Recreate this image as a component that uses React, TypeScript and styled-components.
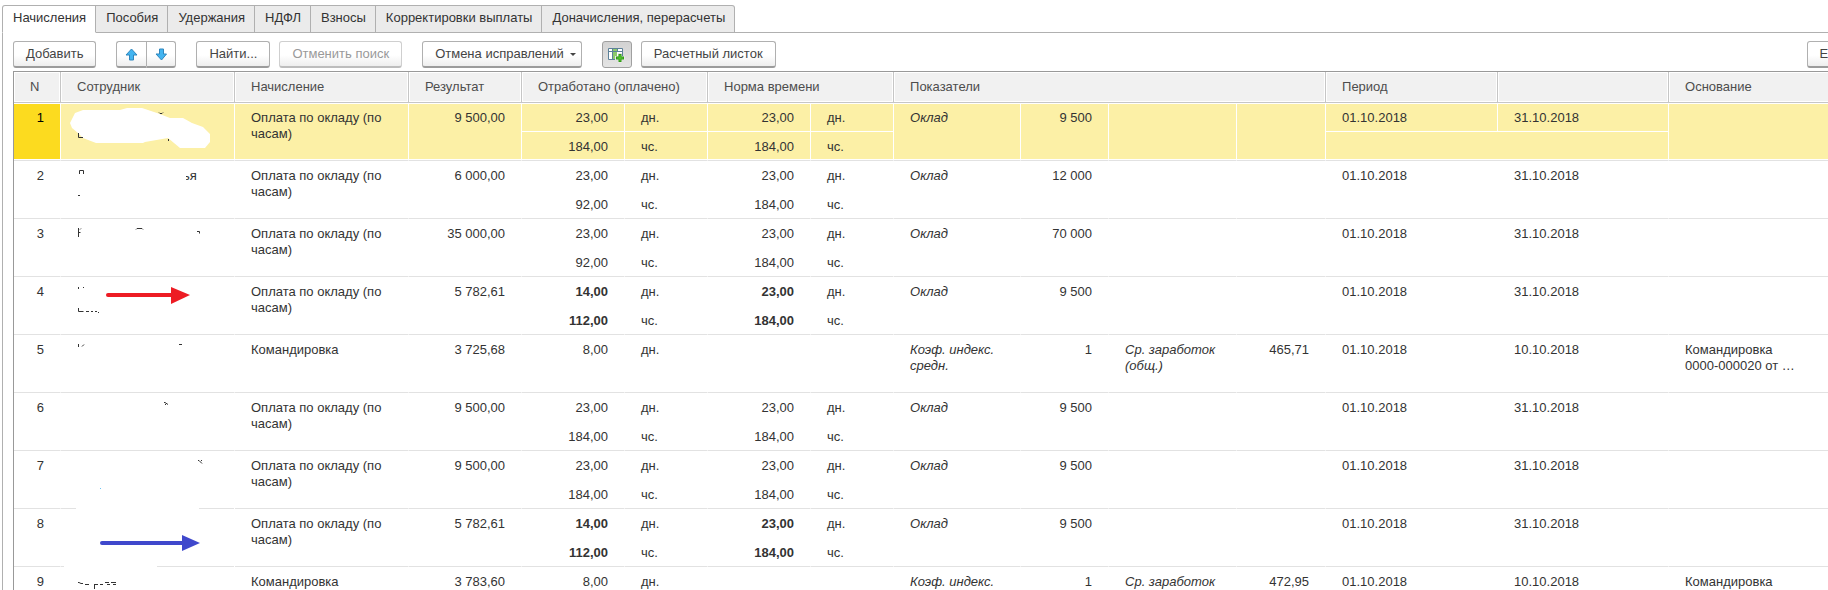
import React from "react";
import styled, { createGlobalStyle, css } from "styled-components";

const GlobalStyle = createGlobalStyle`
  * { box-sizing: border-box; }
  body {
    margin: 0;
    background: #fff;
    color: #333;
    font: 13px/16px "Liberation Sans", Arial, sans-serif;
  }
`;

const Viewport = styled.main`
  height: 100vh;
  overflow: hidden;
  padding: 5px 0 0 2px;
`;

const Workspace = styled.div`
  display: flex;
  flex-direction: column;
  width: calc(100% + 36px);
  min-width: 1720px;
  min-height: 100%;
`;

const TabBar = styled.div`
  display: flex;
  box-shadow: inset 0 -1px #b0b0b0;
`;

const Tab = styled.button<{ $active?: boolean }>`
  height: 28px;
  padding: 0 9px 2px 10px;
  border: 1px solid #b0b0b0;
  border-left-width: ${(p) => (p.$active ? "1px" : "0")};
  border-bottom-color: ${(p) => (p.$active ? "#fff" : "#b0b0b0")};
  background: ${(p) => (p.$active ? "#fff" : "#ebebeb")};
  color: #333;
  font: inherit;
  &:first-child { border-top-left-radius: 3px; }
  &:last-child { border-top-right-radius: 3px; }
`;

const Panel = styled.section`
  flex: 1;
  padding: 8px 0 0 10px;
  border-left: 1px solid #b0b0b0;
`;

const Toolbar = styled.div`
  display: flex;
  align-items: center;
  gap: 20px;
  height: 30px;
  padding-bottom: 3px;
`;

const ButtonGroup = styled.div`
  display: flex;
  gap: 9px;
`;

const PairGroup = styled.div`
  display: flex;
  button:first-child { border-radius: 3px 0 0 3px; border-right-width: 0; }
  button:last-child { border-radius: 0 3px 3px 0; }
`;

const Button = styled.button<{ $icon?: boolean; $pressed?: boolean }>`
  display: flex;
  align-items: center;
  justify-content: center;
  gap: 6px;
  height: 27px;
  width: ${(p) => (p.$icon ? "30px" : "auto")};
  padding: ${(p) => (p.$icon ? "0" : "0 12px")};
  border: 1px solid #b0b0b0;
  border-bottom: 2px solid #9c9c9c;
  border-radius: 3px;
  background: linear-gradient(#fff 55%, #eee);
  color: #444;
  font: inherit;
  white-space: nowrap;
  &:disabled {
    color: #999;
    border-color: #cfcfcf;
    border-bottom-color: #bdbdbd;
  }
  ${(p) =>
    p.$pressed &&
    css`
      background: linear-gradient(#d2d2d2, #e4e4e4);
      border: 1px solid #a0a0a0;
    `}
`;

const MenuButton = styled(Button)`
  padding-right: 5px;
`;

const MoreButton = styled(MenuButton)`
  margin-left: auto;
`;

const Caret = styled.span`
  border: 3px solid transparent;
  border-top-color: #444;
  border-bottom: 0;
`;

const Grid = styled.table`
  width: 100%;
  table-layout: fixed;
  border-collapse: separate;
  border-spacing: 0;
  border: solid #999;
  border-width: 1px 0 0 1px;
`;

const Head = styled.th`
  height: 31px;
  padding: 0 16px;
  border: solid #c6c6c6;
  border-width: 0 1px 1px 0;
  background: #f1f1f1;
  box-shadow: inset 0 0 0 1px #fff;
  color: #4d4d4d;
  font-weight: normal;
  text-align: left;
  white-space: nowrap;
`;

const Line = styled.tr<{ $selected: boolean }>`
  height: 29px;
  background: ${(p) => (p.$selected ? "#fcf0a6" : "#fff")};
`;

type CellProps = {
  $right?: boolean;
  $bold?: boolean;
  $italic?: boolean;
  $marker?: boolean;
  $inner?: boolean;
};

const Cell = styled.td<CellProps>`
  padding: 7px 16px 0;
  border-right: 1px solid #fff;
  border-bottom: 1px solid ${(p) => (p.$inner ? "#fff" : "#e2e2e2")};
  box-shadow: inset 0 ${(p) => (p.$inner ? "1px" : "-1px")} #fff;
  vertical-align: top;
  overflow: hidden;
  text-align: ${(p) => (p.$right ? "right" : "left")};
  font-weight: ${(p) => (p.$bold ? "bold" : "normal")};
  font-style: ${(p) => (p.$italic ? "italic" : "normal")};
  background: ${(p) => (p.$marker ? "#fcdb1f" : "transparent")};
  color: ${(p) => (p.$marker ? "#000" : "#333")};
`;

const TallCell = styled(Cell)`
  box-shadow: inset 0 1px #fff, inset 0 -1px #fff;
`;

const PersonCell = styled(TallCell)`
  padding: 0;
`;

const WipedCell = styled(PersonCell)<{ $from: number; $to: number }>`
  border-bottom-width: 0;
  background: linear-gradient(
      to right,
      #e2e2e2 ${(p) => p.$from}px,
      #fff ${(p) => p.$from}px ${(p) => p.$to}px,
      #e2e2e2 ${(p) => p.$to}px
    )
    bottom / 100% 1px no-repeat;
  box-shadow: none;
`;

const Sketch = styled.svg`
  display: block;
  width: 173px;
  height: 57px;
`;

const Basis = styled.div`
  max-width: 112px;
`;

type Entry = {
  kind: string;
  sum: string;
  days: string;
  hours?: string;
  normDays?: string;
  normHours?: string;
  bold?: boolean;
  ind1: string;
  val1: string;
  ind2?: string;
  val2?: string;
  to: string;
  basis?: string;
};

const salary = (sum: string, val1: string, days = "23,00", hours = "184,00", bold = false): Entry => ({
  kind: "Оплата по окладу (по часам)",
  sum,
  days,
  hours,
  normDays: "23,00",
  normHours: "184,00",
  bold,
  ind1: "Оклад",
  val1,
  to: "31.10.2018",
});

const trip = (sum: string, val2: string): Entry => ({
  kind: "Командировка",
  sum,
  days: "8,00",
  ind1: "Коэф. индекс. средн.",
  val1: "1",
  ind2: "Ср. заработок (общ.)",
  val2,
  to: "10.10.2018",
  basis: "Командировка 0000-000020 от …",
});

const entries: Entry[] = [
  salary("9 500,00", "9 500"),
  salary("6 000,00", "12 000", "23,00", "92,00"),
  salary("35 000,00", "70 000", "23,00", "92,00"),
  salary("5 782,61", "9 500", "14,00", "112,00", true),
  trip("3 725,68", "465,71"),
  salary("9 500,00", "9 500"),
  salary("9 500,00", "9 500"),
  salary("5 782,61", "9 500", "14,00", "112,00", true),
  trip("3 783,60", "472,95"),
];

const ink = { stroke: "#333", fill: "none", strokeWidth: 1 };

/* Marks left of the erased names, in the coordinates of the name cell. */
const marks: React.ReactNode[] = [
  <>
    <path
      d="M9 20L14 10 22 7H59L66 5H81L96 10 109 15H122L131 20 142 24 149 31V39L144 45H119L107 35 84 39 82 40H35L22 35 17 30 11 25z"
      fill="#fff"
    />
    <path d="M17.500 30v4.500h4.500M98 9.500l1 1h2l1-1M107.500 36v2" {...ink} />
  </>,
  <>
    <path d="M18.500 13v-3.500h4V13M17 34.500h2" {...ink} />
    <text x="122" y="19" fontSize="13" fill="#333">ья</text>
    <path d="M120 8h8v6h-3v6h-5z" fill="#fff" />
  </>,
  <path d="M17.500 9v9M18 13.500h1.500M19 10.500l1-1M75 10.500l1-1h5l1 1M136 12.500h2.500v2" {...ink} />,
  <>
    <path d="M17.500 10v2M22 10.500h1M17.500 31v3.500h5M25 34.500h3M30 34.500h2M34 34.500h2M37 35.500h1" {...ink} />
    <path d="M47 18h66" stroke="#ed1c24" strokeWidth="4" strokeLinecap="round" />
    <path d="M110 10l19 8-19 9z" fill="#ed1c24" />
  </>,
  <path d="M17.500 9v3M23 9.500l-2 2M118 9.500h3" {...ink} />,
  <path d="M103 9.500h1l3 2M104 12l2-2" {...ink} />,
  <>
    <path d="M137 9.500h1l3 3M140 9.500h1" {...ink} />
    <path d="M39 37.500h1" stroke="#6cc4f5" />
  </>,
  <>
    <path d="M41 34h80" stroke="#3f48cc" strokeWidth="4" strokeLinecap="round" />
    <path d="M121 26l18 8-18 8z" fill="#3f48cc" />
  </>,
  <path d="M17 15.500h1l2 1h2M24 17.500h4M33.500 17v5M33 17.500h4M39 17.500h3M44 15.500h4M46 17.500h3M50 15.500h5M52 17.500h3" {...ink} />,
];

/* Stretch of the bottom rule that is wiped out in a name cell. */
const wipes: Record<number, [number, number]> = { 6: [15, 138], 7: [3, 96] };

const columns = [47, 174, 174, 113, 103, 83, 103, 83, 127, 88, 128, 89, 172, 171];

function Arrow({ down }: { down?: boolean }) {
  return (
    <svg width="13" height="13" viewBox="0 0 13 13" aria-hidden="true">
      <path
        d={down ? "M4.500 1h4v5h3L6.500 12 1 6h3.500z" : "M6.500 1L12 7H8.500v5h-4V7H1z"}
        fill="#42b4f0"
        stroke="#2f86bd"
      />
    </svg>
  );
}

function ColumnsIcon() {
  return (
    <svg width="17" height="16" viewBox="0 0 17 16" aria-hidden="true">
      <path d="M.5 1.500h14v11H.5z" fill="#fff" stroke="#5c8199" />
      <path d="M5 2h4v10H5z" fill="#8cc96b" />
      <path d="M0 4.500h15M4.500 1v4M9.500 1v4M4.500 5v8" stroke="#5c8199" />
      <path d="M12 6v10M7 11h10" stroke="#e8e8e8" strokeWidth="4" />
      <path d="M12 7v8M8 11h8" stroke="#2f9a14" strokeWidth="3" />
      <path d="M12 8v6M9 11h6" stroke="#5cc936" strokeWidth="1" />
    </svg>
  );
}

function Person({ index }: { index: number }) {
  const drawing = <Sketch viewBox="0 0 173 57" aria-hidden="true">{marks[index]}</Sketch>;
  const wipe = wipes[index];
  return wipe ? (
    <WipedCell rowSpan={2} $from={wipe[0]} $to={wipe[1]}>{drawing}</WipedCell>
  ) : (
    <PersonCell rowSpan={2}>{drawing}</PersonCell>
  );
}

function Record({ entry: e, index }: { entry: Entry; index: number }) {
  const selected = index === 0;
  return (
    <>
      <Line $selected={selected}>
        <TallCell rowSpan={2} $right $marker={selected}>{index + 1}</TallCell>
        <Person index={index} />
        <TallCell rowSpan={2}>{e.kind}</TallCell>
        <TallCell rowSpan={2} $right>{e.sum}</TallCell>
        <Cell $inner $right $bold={e.bold}>{e.days}</Cell>
        <Cell $inner>дн.</Cell>
        <Cell $inner $right $bold={e.bold}>{e.normDays}</Cell>
        <Cell $inner>{e.normDays && "дн."}</Cell>
        <TallCell rowSpan={2} $italic>{e.ind1}</TallCell>
        <TallCell rowSpan={2} $right>{e.val1}</TallCell>
        <TallCell rowSpan={2} $italic>{e.ind2}</TallCell>
        <TallCell rowSpan={2} $right>{e.val2}</TallCell>
        <Cell $inner>01.10.2018</Cell>
        <Cell $inner>{e.to}</Cell>
        <TallCell rowSpan={2}>{e.basis && <Basis>{e.basis}</Basis>}</TallCell>
      </Line>
      <Line $selected={selected}>
        <Cell $right $bold={e.bold}>{e.hours}</Cell>
        <Cell>{e.hours && "чс."}</Cell>
        <Cell $right $bold={e.bold}>{e.normHours}</Cell>
        <Cell>{e.normHours && "чс."}</Cell>
        <Cell colSpan={2} />
      </Line>
    </>
  );
}

const tabs = ["Начисления", "Пособия", "Удержания", "НДФЛ", "Взносы", "Корректировки выплаты", "Доначисления, перерасчеты"];

export default function App() {
  return (
    <Viewport>
      <GlobalStyle />
      <Workspace>
        <TabBar role="tablist">
          {tabs.map((name, i) => (
            <Tab key={name} role="tab" aria-selected={i === 0} $active={i === 0}>{name}</Tab>
          ))}
        </TabBar>
        <Panel>
          <Toolbar>
            <Button>Добавить</Button>
            <PairGroup>
              <Button $icon aria-label="Переместить вверх"><Arrow /></Button>
              <Button $icon aria-label="Переместить вниз"><Arrow down /></Button>
            </PairGroup>
            <ButtonGroup>
              <Button>Найти...</Button>
              <Button disabled>Отменить поиск</Button>
            </ButtonGroup>
            <MenuButton>Отмена исправлений <Caret /></MenuButton>
            <ButtonGroup>
              <Button $icon $pressed aria-label="Настройка колонок"><ColumnsIcon /></Button>
              <Button>Расчетный листок</Button>
            </ButtonGroup>
            <MoreButton>Еще <Caret /></MoreButton>
          </Toolbar>
          <Grid>
            <colgroup>
              {columns.map((width, i) => <col key={i} width={width} />)}
              <col />
            </colgroup>
            <thead>
              <tr>
                <Head>N</Head>
                <Head>Сотрудник</Head>
                <Head>Начисление</Head>
                <Head>Результат</Head>
                <Head colSpan={2}>Отработано (оплачено)</Head>
                <Head colSpan={2}>Норма времени</Head>
                <Head colSpan={4}>Показатели</Head>
                <Head>Период</Head>
                <Head />
                <Head>Основание</Head>
              </tr>
            </thead>
            <tbody>
              {entries.map((entry, i) => <Record key={i} entry={entry} index={i} />)}
            </tbody>
          </Grid>
        </Panel>
      </Workspace>
    </Viewport>
  );
}
